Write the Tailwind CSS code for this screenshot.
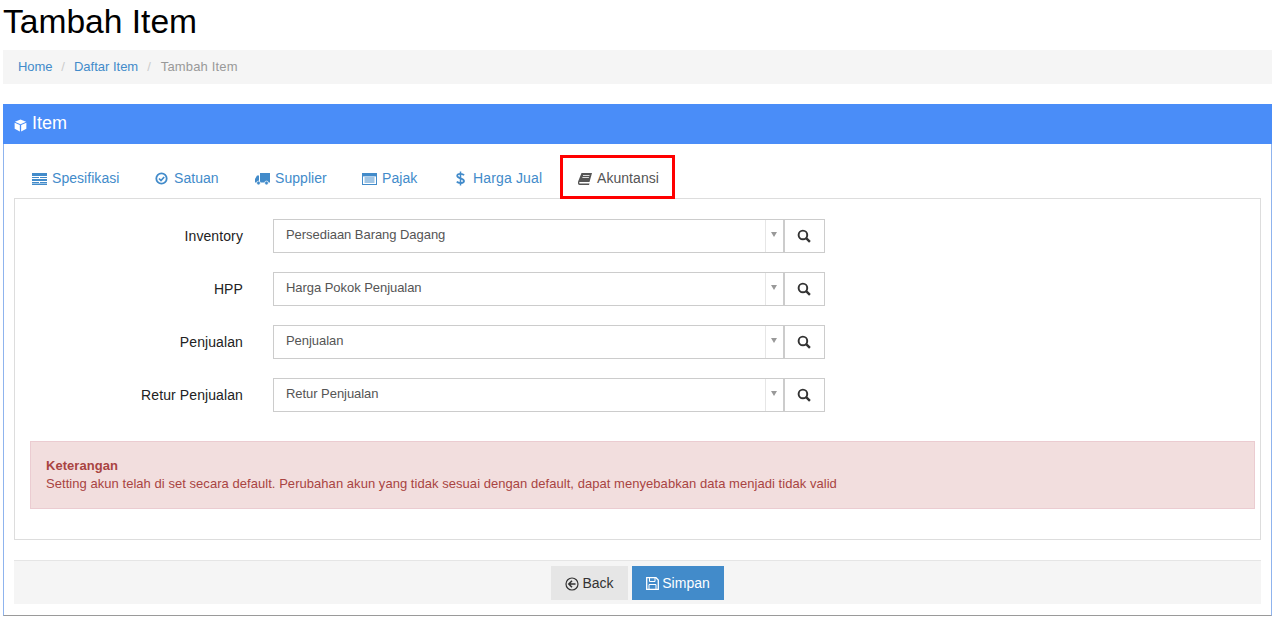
<!DOCTYPE html>
<html lang="en">
  <head>
    <meta charset="UTF-8" />
    <title>Tambah Item</title>
    <script src="https://cdn.jsdelivr.net/npm/@tailwindcss/browser@4"></script>
  </head>
  <body class="bg-white font-['Liberation_Sans',Arial,sans-serif] text-[14px] text-[#333] h-[619px] overflow-hidden">
    <div class="px-[3px]">
      <h1 class="h-[50px] text-[33.6px] leading-[44px] text-black">Tambah Item</h1>

      <!-- breadcrumb -->
      <div class="h-[34px] bg-[#f5f5f5] pl-[15px] flex items-center text-[13px] mb-[20px]">
        <a class="text-[#428bca] tracking-[-0.1px]">Home</a>
        <span class="text-[#ccc] px-[9px]">/</span>
        <a class="text-[#428bca]">Daftar Item</a>
        <span class="text-[#ccc] px-[9px]">/</span>
        <span class="text-[#999] ml-px tracking-[0.15px]">Tambah Item</span>
      </div>

      <!-- panel -->
      <div class="h-[512px] border border-[#4a8df8] border-t-0 border-b-[#9a9a9a] border-x-[#8fb4ee] relative">
        <div class="h-[40px] bg-[#4a8df8] -mx-px flex items-center pl-[11px] pb-[2px] text-white text-[18px]">
          <svg class="w-[13px] h-[13px] mr-[5px] mt-[5px]" viewBox="0 0 14 14" fill="#fff">
            <path d="M7 .5 13 3 7 5.6 1 3z" />
            <path d="M.7 4 6.3 6.5V13.5L.7 10.6z" />
            <path d="M13.3 4 7.7 6.5V13.5L13.3 10.6z" />
          </svg>
          <span>Item</span>
        </div>

        <div class="px-[10px]">
          <!-- tabs -->
          <div class="h-[54px] pt-[14px] flex text-[14px] tracking-[0.05px] text-[#428bca]">
            <a class="h-[41px] w-[123px] pl-[18px] flex items-center">
              <svg class="w-[15px] h-[12px] mr-[5px]" viewBox="0 0 15 12" fill="#428bca">
                <path d="M0 0h15v3H0zM0 4h7v1H0zM8 4h7v1H8zM0 6h15v2H0zM0 9h7v1H0zM8 9h7v1H8zM0 10.5h15V12H0z" />
              </svg>
              Spesifikasi
            </a>
            <a class="h-[41px] w-[100px] pl-[18px] flex items-center">
              <svg class="w-[13px] h-[13px] mr-[6px]" viewBox="0 0 13 13" fill="none" stroke="#428bca">
                <circle cx="6.5" cy="6.5" r="5.2" stroke-width="1.8" />
                <path d="M4 6.5 6 8.5 9.2 5" stroke-width="1.7" />
              </svg>
              Satuan
            </a>
            <a class="h-[41px] w-[108px] pl-[18px] flex items-center">
              <svg class="w-[15px] h-[12px] mr-[5px]" viewBox="0 0 15 12" fill="#428bca">
                <path d="M5 0h10v9.5H5zM4 2.5v7H0V6l2-3.5z" />
                <circle cx="3.5" cy="10" r="1.9" stroke="#fff" stroke-width=".7" />
                <circle cx="11.5" cy="10" r="1.9" stroke="#fff" stroke-width=".7" />
              </svg>
              Supplier
            </a>
            <a class="h-[41px] w-[92px] pl-[17px] flex items-center">
              <svg class="w-[15px] h-[12px] mr-[5px]" viewBox="0 0 15 12" fill="none">
                <rect x=".5" y=".5" width="14" height="11" stroke="#428bca" />
                <rect x="1" y="1" width="13" height="2.4" fill="#428bca" />
                <path d="M2.5 5h10M2.5 7h10M2.5 9h10" stroke="#428bca" />
              </svg>
              Pajak
            </a>
            <a class="h-[41px] w-[123px] pl-[19px] flex items-center tracking-[0.15px]">
              <svg class="w-[9px] h-[15px] mr-[8px]" viewBox="0 0 9 15" fill="none" stroke="#428bca" stroke-width="1.8">
                <path d="M8 4.2C7 2.6 1.2 2 1.2 4.8 1.2 7.8 8 6.8 8 10c0 2.7-5.7 2.4-7.200.6" />
                <path d="M4.5 .5v14" stroke-width="1.5" />
              </svg>
              Harga Jual
            </a>
            <a class="h-[41px] pl-[18px] flex items-center text-[#555]">
              <svg class="w-[14px] h-[12px] mr-[5px]" viewBox="0 0 14 12" fill="#555">
                <path d="M3.5 0H14l-2.5 9H1.8C1 9 1 10.5 1.8 10.5H11.500L11 12H1.500C-.2 12-.3 9.500.3 8z" />
                <path d="M5 2.5h6.500M4.400 4.500h6.500" stroke="#fff" stroke-width=".8" />
              </svg>
              Akuntansi
            </a>
          </div>

          <!-- tab content -->
          <div class="h-[342px] border border-[#ddd] pt-[20px] pl-[15px] pr-[5px]">
            <div class="flex flex-col gap-[19px] mb-[29px]">
              <div class="flex items-center h-[34px]">
                <label class="w-[213px] text-right text-[#222] tracking-[0.1px]">Inventory</label>
                <div class="ml-[30px] w-[511px] h-[34px] border border-[#ccc] flex items-center text-[13px] tracking-[-0.05px] text-[#555] pl-[12px] relative pb-[3px]">
                  Persediaan Barang Dagang
                  <span class="absolute right-0 top-0 bottom-0 w-[18px] pr-[2px] border-l border-[#e6e6e6] flex items-center justify-center">
                    <span class="w-0 h-0 border-x-[3px] border-x-transparent border-t-[5px] border-t-[#999] -mt-[3px]"></span>
                  </span>
                </div>
                <button class="w-[41px] h-[34px] pr-[2px] border border-[#ccc] flex items-center justify-center">
                  <svg class="w-[14px] h-[14px]" viewBox="0 0 13 13" fill="none" stroke="#333">
                    <circle cx="5.5" cy="5.5" r="4" stroke-width="1.8" />
                    <path d="M8.5 8.5 12 12" stroke-width="2.2" />
                  </svg>
                </button>
              </div>
              <div class="flex items-center h-[34px]">
                <label class="w-[213px] text-right text-[#222] tracking-[0.1px]">HPP</label>
                <div class="ml-[30px] w-[511px] h-[34px] border border-[#ccc] flex items-center text-[13px] tracking-[-0.05px] text-[#555] pl-[12px] relative pb-[3px]">
                  Harga Pokok Penjualan
                  <span class="absolute right-0 top-0 bottom-0 w-[18px] pr-[2px] border-l border-[#e6e6e6] flex items-center justify-center">
                    <span class="w-0 h-0 border-x-[3px] border-x-transparent border-t-[5px] border-t-[#999] -mt-[3px]"></span>
                  </span>
                </div>
                <button class="w-[41px] h-[34px] pr-[2px] border border-[#ccc] flex items-center justify-center">
                  <svg class="w-[14px] h-[14px]" viewBox="0 0 13 13" fill="none" stroke="#333">
                    <circle cx="5.5" cy="5.5" r="4" stroke-width="1.8" />
                    <path d="M8.5 8.5 12 12" stroke-width="2.2" />
                  </svg>
                </button>
              </div>
              <div class="flex items-center h-[34px]">
                <label class="w-[213px] text-right text-[#222] tracking-[0.1px]">Penjualan</label>
                <div class="ml-[30px] w-[511px] h-[34px] border border-[#ccc] flex items-center text-[13px] tracking-[-0.05px] text-[#555] pl-[12px] relative pb-[3px]">
                  Penjualan
                  <span class="absolute right-0 top-0 bottom-0 w-[18px] pr-[2px] border-l border-[#e6e6e6] flex items-center justify-center">
                    <span class="w-0 h-0 border-x-[3px] border-x-transparent border-t-[5px] border-t-[#999] -mt-[3px]"></span>
                  </span>
                </div>
                <button class="w-[41px] h-[34px] pr-[2px] border border-[#ccc] flex items-center justify-center">
                  <svg class="w-[14px] h-[14px]" viewBox="0 0 13 13" fill="none" stroke="#333">
                    <circle cx="5.5" cy="5.5" r="4" stroke-width="1.8" />
                    <path d="M8.5 8.5 12 12" stroke-width="2.2" />
                  </svg>
                </button>
              </div>
              <div class="flex items-center h-[34px]">
                <label class="w-[213px] text-right text-[#222] tracking-[0.1px]">Retur Penjualan</label>
                <div class="ml-[30px] w-[511px] h-[34px] border border-[#ccc] flex items-center text-[13px] tracking-[-0.05px] text-[#555] pl-[12px] relative pb-[3px]">
                  Retur Penjualan
                  <span class="absolute right-0 top-0 bottom-0 w-[18px] pr-[2px] border-l border-[#e6e6e6] flex items-center justify-center">
                    <span class="w-0 h-0 border-x-[3px] border-x-transparent border-t-[5px] border-t-[#999] -mt-[3px]"></span>
                  </span>
                </div>
                <button class="w-[41px] h-[34px] pr-[2px] border border-[#ccc] flex items-center justify-center">
                  <svg class="w-[14px] h-[14px]" viewBox="0 0 13 13" fill="none" stroke="#333">
                    <circle cx="5.5" cy="5.5" r="4" stroke-width="1.8" />
                    <path d="M8.5 8.5 12 12" stroke-width="2.2" />
                  </svg>
                </button>
              </div>
            </div>

            <div class="h-[68px] bg-[#f2dede] border border-[#ebccd1] text-[#a94442] text-[13px] tracking-[0.045px] leading-[18px] pl-[15px] pt-[15px]">
              <strong class="block">Keterangan</strong>
              Setting akun telah di set secara default. Perubahan akun yang tidak sesuai dengan default, dapat menyebabkan data menjadi tidak valid
            </div>
          </div>

          <!-- footer -->
          <div class="mt-[20px] h-[44px] bg-[#f5f5f5] border-t border-[#e5e5e5] flex items-center justify-center gap-[4px] text-[14px]">
            <button class="h-[34px] w-[77px] pt-[2px] bg-[#e6e6e6] text-[#333] flex items-center justify-center">
              <svg class="w-[14px] h-[14px] mr-[3px]" viewBox="0 0 14 14" fill="none" stroke="#333">
                <circle cx="7" cy="7" r="6" stroke-width="1.2" />
                <path d="M7 3.8 3.8 7 7 10.2M4 7h6.5" stroke-width="1.5" />
              </svg>
              Back
            </button>
            <button class="h-[34px] w-[92px] pt-[2px] bg-[#428bca] text-white flex items-center justify-center">
              <svg class="w-[13px] h-[13px] mr-[3px]" viewBox="0 0 13 13" fill="none" stroke="#fff">
                <path d="M.7.7H10L12.3 3V12.3H.7z" stroke-width="1.3" />
                <path d="M3.5 1v3.500h5.500V1M3 12V7.500h7V12" />
              </svg>
              Simpan
            </button>
          </div>
        </div>

        <!-- highlight box drawn over the active tab -->
        <div class="absolute left-[556px] top-[51px] w-[115px] h-[44px] border-[3px] border-[#f00]"></div>
      </div>
    </div>
  </body>
</html>
